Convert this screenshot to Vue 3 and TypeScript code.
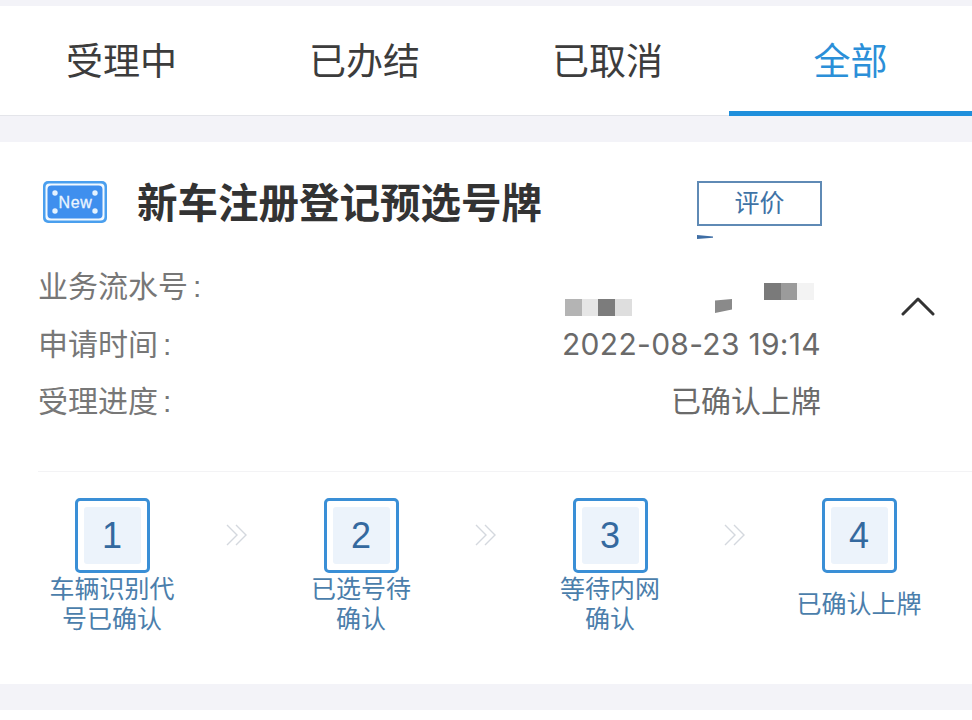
<script setup lang="ts">
const tabs = [
  { label: '受理中', active: false },
  { label: '已办结', active: false },
  { label: '已取消', active: false },
  { label: '全部', active: true },
]
const steps = [
  { n: 1, lines: ['车辆识别代', '号已确认'] },
  { n: 2, lines: ['已选号待', '确认'] },
  { n: 3, lines: ['等待内网', '确认'] },
  { n: 4, lines: ['已确认上牌'] },
]
</script>

<template>
  <div class="page">
    <nav class="tabs">
      <div v-for="t in tabs" :key="t.label" class="tab" :class="{ active: t.active }">{{ t.label }}</div>
    </nav>
    <section class="card">
      <header class="title-row">
        <svg class="new-icon" viewBox="0 0 64 42" width="64" height="42">
          <rect x="0" y="0" width="64" height="42" rx="5" fill="#4a9fee" />
          <rect x="2.5" y="2.5" width="59" height="37" rx="4" fill="#f2f9ff" />
          <rect x="4.5" y="4.5" width="55" height="33" rx="4" fill="#3f8fee" />
          <circle cx="12" cy="12" r="2.7" fill="#e4f2ff" />
          <circle cx="52" cy="12" r="2.7" fill="#e4f2ff" />
          <circle cx="12" cy="30" r="2.7" fill="#e4f2ff" />
          <circle cx="52" cy="30" r="2.7" fill="#e4f2ff" />
          <text x="32.5" y="26.5" text-anchor="middle" class="new-text">New</text>
        </svg>
        <h1 class="title">新车注册登记预选号牌</h1>
        <div class="rate-wrap">
          <button class="rate">评价</button>
          <span class="rate-mark"></span>
        </div>
      </header>

      <div class="info">
        <div class="rows">
          <div class="row first">
            <span class="key">业务流水号<span class="colon">:</span></span>
            <div class="masked" aria-hidden="true">
              <i class="m m1"></i><i class="m m2"></i><i class="m m3"></i><i class="m m4"></i>
              <i class="blot"></i>
              <i class="m hi m5"></i><i class="m hi m6"></i><i class="m hi m7"></i>
            </div>
          </div>
          <div class="row"><span class="key">申请时间<span class="colon">:</span></span><span class="val digits">2022-08-23 19:14</span></div>
          <div class="row"><span class="key">受理进度<span class="colon">:</span></span><span class="val">已确认上牌</span></div>
        </div>
        <svg class="chevron" viewBox="0 0 34 20" width="34" height="20">
          <path d="M2 18 L17 3 L32 18" fill="none" stroke="#333" stroke-width="3" stroke-linecap="round" stroke-linejoin="round" />
        </svg>
      </div>

      <div class="steps">
        <template v-for="(s, i) in steps" :key="s.n">
          <div class="step">
            <div class="num-box"><span class="num">{{ s.n }}</span></div>
            <div class="label" :class="{ single: s.lines.length === 1 }">
              <div v-for="l in s.lines" :key="l">{{ l }}</div>
            </div>
          </div>
          <svg v-if="i < 3" class="arrows" viewBox="0 0 22 24" width="22" height="24">
            <path d="M1 2 L11 12 L1 22 M10 2 L20 12 L10 22" fill="none" stroke="#d4d8de" stroke-width="1.4" />
          </svg>
        </template>
      </div>
    </section>
  </div>
</template>

<style>
html, body { margin: 0; background: #fff; }
</style>

<style scoped>
.page {
  width: 972px;
  height: 710px;
  overflow: hidden;
  background: #f3f3f8;
  padding-top: 6px;
  box-sizing: border-box;
  font-family: "Liberation Sans", "Noto Sans CJK SC", sans-serif;
}
.tabs {
  display: grid;
  grid-template-columns: repeat(4, 243px);
  height: 109px;
  background: #fff;
  border-bottom: 1px solid #e4e5ea;
}
.tab {
  height: 109px;
  box-sizing: border-box;
  padding-top: 34px;
  text-align: center;
  font-size: 37px;
  line-height: 46px;
  color: #3c3c3c;
}
.tab.active {
  color: #2b8fd8;
  height: 110px;
  border-bottom: 5px solid #1f8fdc;
}
.card {
  margin-top: 26px;
  height: 542px;
  background: #fff;
  padding-left: 38px;
  box-sizing: border-box;
}
.title-row {
  display: flex;
  align-items: flex-start;
  padding-top: 39px;
  height: 113px;
  box-sizing: border-box;
}
.new-icon { margin-left: 5px; flex: none; }
.new-text {
  font-family: "Liberation Sans", sans-serif;
  font-size: 16px;
  fill: #eaf5ff;
  stroke: #eaf5ff;
  stroke-width: 0.3px;
  letter-spacing: 0.6px;
}
.title {
  margin: 0 0 0 30px;
  font-size: 40.5px;
  line-height: 46px;
  font-weight: 700;
  color: #333;
  width: 561px;
  flex: none;
  white-space: nowrap;
}
.rate-wrap {
  display: flex;
  flex-direction: column;
  margin-left: -1px;
}
.rate {
  width: 125px;
  height: 45px;
  margin: 0;
  padding: 0;
  background: #fff;
  border: 2px solid #5f8ab5;
  color: #3f73a6;
  font-size: 25px;
  font-family: inherit;
  line-height: 41px;
  box-sizing: border-box;
}
.rate-mark {
  width: 16px;
  height: 4px;
  margin-top: 9px;
  background: #3f6ea5;
  clip-path: polygon(0 0, 100% 40%, 100% 70%, 0 100%);
}
.info {
  position: relative;
  height: 217px;
  border-bottom: 1px solid #f3f3f5;
  box-sizing: border-box;
}
.rows {
  width: 783px;
  padding-top: 3px;
}
.row {
  display: flex;
  justify-content: space-between;
  align-items: baseline;
  height: 57.5px;
  font-size: 30px;
  line-height: 57px;
  color: #777;
}
.key { color: #777; }
.colon { margin-left: 5px; }
.val { color: #6a6a6a; }
.digits { font-family: Inter, "Liberation Sans", sans-serif; letter-spacing: 0.3px; }
.masked {
  position: relative;
  width: 256px;
  height: 50px;
  align-self: flex-start;
}
.m {
  position: absolute;
  top: 41px;
  width: 17px;
  height: 17px;
}
.m1 { left: 0; background: #b4b4b4; }
.m2 { left: 17px; background: #e6e6e6; }
.m3 { left: 33px; background: #7c7c7c; }
.m4 { left: 50px; background: #dedede; }
.hi { top: 25px; }
.m5 { left: 199px; background: #7a7a7a; }
.m6 { left: 216px; background: #9b9b9b; }
.m7 { left: 232px; background: #f3f3f3; }
.blot {
  position: absolute;
  left: 150px;
  top: 41px;
  width: 17px;
  height: 14px;
  background: #8a8a8a;
  clip-path: polygon(0 10%, 100% 0, 100% 75%, 0 100%);
}
.chevron {
  position: absolute;
  left: 863px;
  top: 41px;
}
.steps {
  display: flex;
  align-items: flex-start;
  padding-top: 26px;
}
.step {
  width: 148px;
  flex: none;
  display: flex;
  flex-direction: column;
  align-items: center;
}
.num-box {
  width: 75px;
  height: 75px;
  box-sizing: border-box;
  border: 3px solid #3a8fd6;
  border-radius: 5px;
  padding: 6px;
}
.num {
  display: block;
  height: 100%;
  background: #ecf3fb;
  border-radius: 3px;
  text-align: center;
  font-size: 36px;
  line-height: 57px;
  color: #34699f;
}
.label {
  font-size: 25px;
  line-height: 29.5px;
  color: #4b7eab;
  text-align: center;
  margin-top: 2px;
  white-space: nowrap;
}
.label.single { margin-top: 17px; }
.arrows {
  flex: none;
  margin: 25px 39px 0 40px;
}
</style>
